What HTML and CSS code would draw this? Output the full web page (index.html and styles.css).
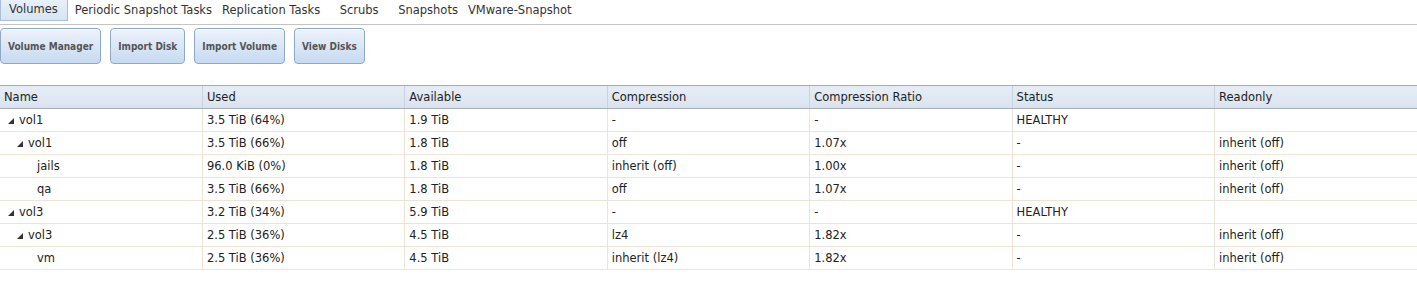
FILE: index.html
```html
<!DOCTYPE html>
<html lang="en">
<head>
  <meta charset="UTF-8">
  <title>Storage</title>
  <link rel="stylesheet" href="styles.css">
</head>
<body>
  <nav class="tabs">
    <a class="tab active">Volumes</a>
    <a class="tab">Periodic Snapshot Tasks</a>
    <a class="tab">Replication Tasks</a>
    <a class="tab">Scrubs</a>
    <a class="tab">Snapshots</a>
    <a class="tab">VMware-Snapshot</a>
  </nav>

  <div class="toolbar">
    <button class="btn">Volume Manager</button>
    <button class="btn">Import Disk</button>
    <button class="btn">Import Volume</button>
    <button class="btn">View Disks</button>
  </div>

  <table class="grid">
    <thead>
      <tr>
        <th>Name</th><th>Used</th><th>Available</th><th>Compression</th><th>Compression Ratio</th><th>Status</th><th>Readonly</th>
      </tr>
    </thead>
    <tbody>
      <tr>
        <td class="lvl1"><span class="exp"><svg width="6" height="6" viewBox="0 0 6 6"><polygon points="6,0 6,6 0,6"/></svg></span>vol1</td>
        <td>3.5 TiB (64%)</td><td>1.9 TiB</td><td>-</td><td>-</td><td>HEALTHY</td><td></td>
      </tr>
      <tr>
        <td class="lvl2"><span class="exp"><svg width="6" height="6" viewBox="0 0 6 6"><polygon points="6,0 6,6 0,6"/></svg></span>vol1</td>
        <td>3.5 TiB (66%)</td><td>1.8 TiB</td><td>off</td><td>1.07x</td><td>-</td><td>inherit (off)</td>
      </tr>
      <tr>
        <td class="lvl3">jails</td>
        <td>96.0 KiB (0%)</td><td>1.8 TiB</td><td>inherit (off)</td><td>1.00x</td><td>-</td><td>inherit (off)</td>
      </tr>
      <tr>
        <td class="lvl3">qa</td>
        <td>3.5 TiB (66%)</td><td>1.8 TiB</td><td>off</td><td>1.07x</td><td>-</td><td>inherit (off)</td>
      </tr>
      <tr>
        <td class="lvl1"><span class="exp"><svg width="6" height="6" viewBox="0 0 6 6"><polygon points="6,0 6,6 0,6"/></svg></span>vol3</td>
        <td>3.2 TiB (34%)</td><td>5.9 TiB</td><td>-</td><td>-</td><td>HEALTHY</td><td></td>
      </tr>
      <tr>
        <td class="lvl2"><span class="exp"><svg width="6" height="6" viewBox="0 0 6 6"><polygon points="6,0 6,6 0,6"/></svg></span>vol3</td>
        <td>2.5 TiB (36%)</td><td>4.5 TiB</td><td>lz4</td><td>1.82x</td><td>-</td><td>inherit (off)</td>
      </tr>
      <tr>
        <td class="lvl3">vm</td>
        <td>2.5 TiB (36%)</td><td>4.5 TiB</td><td>inherit (lz4)</td><td>1.82x</td><td>-</td><td>inherit (off)</td>
      </tr>
    </tbody>
  </table>
</body>
</html>
```

FILE: styles.css
```css
body {
  margin: 0;
  font-family: "DejaVu Sans", Verdana, sans-serif;
  font-size: 11.5px;
  color: #222;
  background: #fff;
}
.tabs {
  display: flex;
  align-items: flex-start;
  height: 25px;
  border-bottom: 1px solid #c4c4c4;
  box-sizing: border-box;
}
.tab {
  display: block;
  min-width: 58px;
  padding: 0 5px;
  height: 20px;
  line-height: 20px;
  text-align: center;
  color: #333;
  font-size: 11.5px;
  cursor: pointer;
}
.tab.active {
  padding: 0 9px 0 8px;
  min-width: 0;
  background: linear-gradient(to bottom, #e8f0f9, #d6e4f4);
  border: 1px solid #a9bfd8;
  border-top: none;
  line-height: 19px;
  margin-right: 2px;
}
.toolbar {
  display: flex;
  gap: 9px;
  padding: 3px 0 0 0;
  height: 60px;
  box-sizing: border-box;
}
.btn {
  height: 36px;
  padding: 0 7px;
  font-family: "DejaVu Sans Condensed", "DejaVu Sans", sans-serif;
  font-size: 10px;
  font-weight: bold;
  color: #555;
  background: linear-gradient(to bottom, #edf3fb, #c6daf1);
  border: 1px solid #8ea9c6;
  border-radius: 4px;
  box-shadow: inset 0 1px 0 #fff;
}
.grid {
  width: 100%;
  border-collapse: collapse;
  table-layout: fixed;
}
.grid th {
  height: 22px;
  padding: 0 4px;
  text-align: left;
  font-weight: normal;
  color: #222;
  background: linear-gradient(to bottom, #e6edf6, #d9e3ef);
  border-top: 1px solid #a9aeb4;
  border-bottom: 1px solid #a9aeb4;
  border-left: 1px solid #c9d2dd;
}
.grid th:first-child,
.grid td:first-child {
  border-left: none;
}
.grid td {
  height: 22px;
  padding: 0 4px;
  border-bottom: 1px solid #eee3d4;
  border-left: 1px solid #eee3d4;
  white-space: nowrap;
}
.grid td.lvl1 {
  padding-left: 8px;
}
.grid td.lvl2 {
  padding-left: 17px;
}
.grid td.lvl3 {
  padding-left: 37px;
}
.exp {
  display: inline-block;
  width: 11px;
}
.exp svg {
  fill: #333;
  vertical-align: 0;
}
```
